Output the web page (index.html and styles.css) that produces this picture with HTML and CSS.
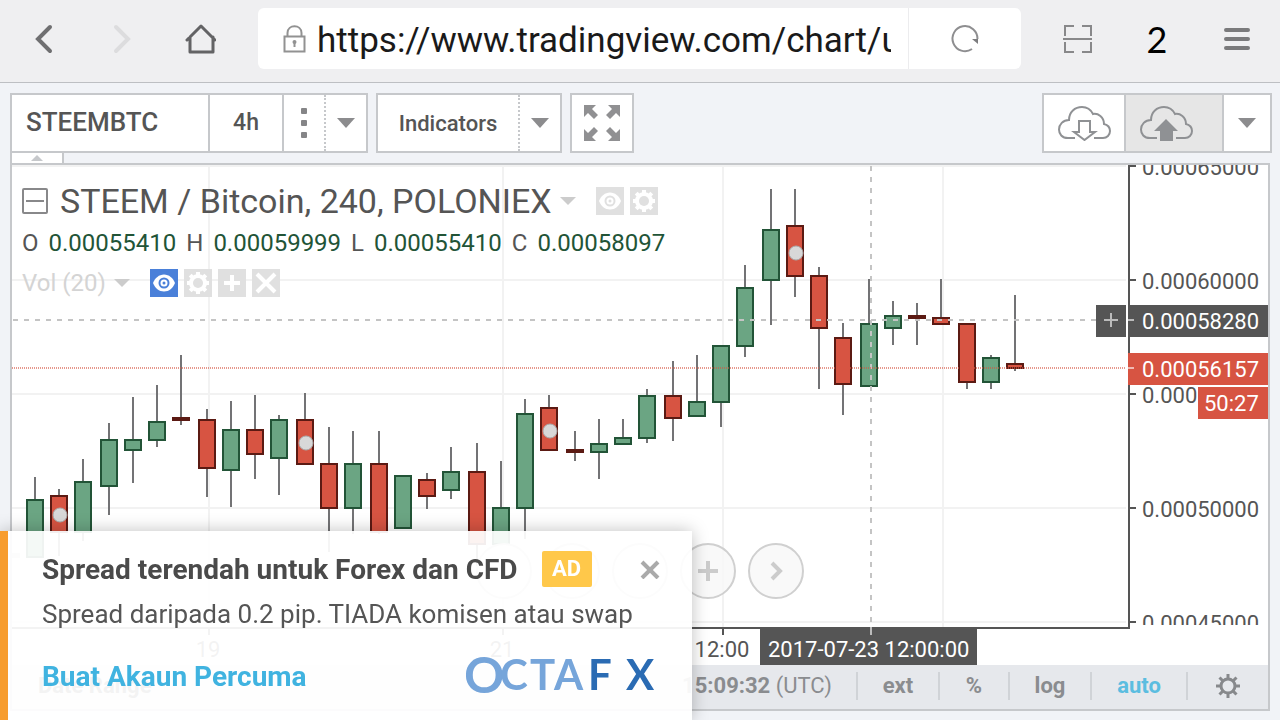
FILE: index.html
```html
<!DOCTYPE html>
<html lang="ms">
    <head>
        <meta charset="utf-8">
        <meta name="viewport" content="width=device-width,initial-scale=1.0">
        <title>STEEMBTC | Chart</title>
        <link rel="stylesheet" href="styles.css">
    </head>
    <body>
        <!-- shared icons -->
        <svg class="sprite" aria-hidden="true">
            <symbol id="eye" viewBox="0 0 28 28">
                <path d="M3 14c2-5 6-8.500 11-8.500S23 9 25 14c-2 5-6 8.500-11 8.500S5 19 3 14z" fill="#fff"/>
                <circle cx="14" cy="14" r="5.500" fill="currentColor"/>
                <circle cx="14" cy="14" r="3.500" fill="#fff"/>
                <circle cx="14" cy="14" r="1.500" fill="currentColor"/>
            </symbol>
            <symbol id="cog" viewBox="0 0 28 28">
                <circle cx="14" cy="14" r="9" fill="#fff"/>
                <path d="M14 3v22M3 14h22M6.200 6.200l15.600 15.600M21.800 6.200L6.200 21.800" stroke="#fff" stroke-width="4"/>
                <circle cx="14" cy="14" r="5" fill="currentColor"/>
            </symbol>
            <symbol id="cloud" viewBox="0 0 54 36">
                <path d="M18 33H11C5 33 2 29 2 24.500 2 19.500 6 15 12 15 12 7 18 2 25 2c6 0 9 3 11 7 5-1 11 3 11 10 4 1 6 4 6 7 0 4-3 7-7 7h-9" fill="none" stroke="#8f9194" stroke-width="2"/>
            </symbol>
            <symbol id="corner" viewBox="0 0 14 14">
                <path d="M0 0h12L8 4l6 6-4 4-6-6-4 4z" fill="#909092"/>
            </symbol>
        </svg>

        <header class="browser">
            <button type="button" class="nav-button" aria-label="Back">
                <svg width="30" height="30" viewBox="0 0 30 30"><path d="M21 3L9 15l12 12" fill="none" stroke="#6f6f71" stroke-width="4" stroke-linecap="round"/></svg>
            </button>
            <button type="button" class="nav-button" aria-label="Forward">
                <svg width="30" height="30" viewBox="0 0 30 30"><path d="M9 3l12 12L9 27" fill="none" stroke="#dcdcde" stroke-width="4" stroke-linecap="round"/></svg>
            </button>
            <button type="button" class="nav-button" aria-label="Home">
                <svg width="32" height="30" viewBox="0 0 32 30"><path d="M3 16L17 2l14 14M6 13v15h23V13" fill="none" stroke="#636365" stroke-width="3" stroke-linecap="round" stroke-linejoin="round"/></svg>
            </button>
            <form class="address">
                <svg width="24" height="28" viewBox="0 0 24 28"><path d="M1.500 11.500h20v15h-20zM4.500 11V8c0-9 14-9 14 0v3" fill="none" stroke="#929292" stroke-width="2"/><circle cx="11.500" cy="17" r="2" fill="#929292"/><path d="M11.500 17v5" stroke="#929292" stroke-width="2"/></svg>
                <input class="url" type="text" value="https://www.tradingview.com/chart/usd" aria-label="Address">
                <button type="button" class="reload" aria-label="Reload">
                    <svg width="30" height="30" viewBox="0 0 30 30"><path d="M22 25A12.500 12.500 0 1 1 27.500 15" fill="none" stroke="#8e8e90" stroke-width="2"/><path d="M22 15h6v5z" fill="#7c7c7e"/></svg>
                </button>
            </form>
            <button type="button" class="nav-button wide" aria-label="Scan">
                <svg width="30" height="28" viewBox="0 0 30 28"><path d="M12 1H3v10M20 1h9v10M1 14h29M3 17v10h9M29 17v10h-9" fill="none" stroke="#88888a" stroke-width="2"/></svg>
            </button>
            <button type="button" class="nav-button wide tabs" aria-label="Tabs">2</button>
            <button type="button" class="nav-button wide" aria-label="Menu">
                <svg width="28" height="24" viewBox="0 0 28 24"><path d="M3 3h22M3 12h22M3 21h22" stroke="#7a7a7c" stroke-width="4" stroke-linecap="round"/></svg>
            </button>
        </header>

        <div class="toolbar">
            <div class="group">
                <input class="symbol" type="text" value="STEEMBTC" aria-label="Symbol">
                <button type="button" class="interval">4h</button>
                <button type="button" class="more" aria-label="More intervals"><svg width="6" height="30" viewBox="0 0 6 30" fill="#858587"><rect width="6" height="6" rx="1"/><rect y="12" width="6" height="6" rx="1"/><rect y="24" width="6" height="6" rx="1"/></svg></button>
                <button type="button" class="drop" aria-label="Chart type"><span class="caret"></span></button>
            </div>
            <div class="group">
                <button type="button" class="indicators">Indicators</button>
                <button type="button" class="drop" aria-label="Templates"><span class="caret"></span></button>
            </div>
            <div class="group">
                <button type="button" class="fullscreen" aria-label="Fullscreen">
                    <svg width="36" height="36" viewBox="0 0 36 36">
                        <use href="#corner" width="14" height="14"/>
                        <use href="#corner" width="14" height="14" transform="translate(36 0) rotate(90)"/>
                        <use href="#corner" width="14" height="14" transform="translate(36 36) rotate(180)"/>
                        <use href="#corner" width="14" height="14" transform="translate(0 36) rotate(270)"/>
                    </svg>
                </button>
            </div>
            <div class="group last">
                <button type="button" class="cloud" aria-label="Load chart">
                    <svg width="54" height="36" viewBox="0 0 54 36"><use href="#cloud"/><path d="M22 16h11v11h5L27.500 35 17 27h5z" fill="#fff" stroke="#8f9194" stroke-width="2"/></svg>
                </button>
                <button type="button" class="cloud save" aria-label="Save chart">
                    <svg width="54" height="36" viewBox="0 0 54 36"><use href="#cloud"/><path d="M27 14l12 12h-5v10H21V26h-6z" fill="#8f9194"/></svg>
                </button>
                <button type="button" class="drop" aria-label="Save options"><span class="caret"></span></button>
            </div>
        </div>

        <button type="button" class="pull" aria-label="Hide toolbar"></button>

        <main class="frame">
            <div class="chart">
                <svg class="plot" viewBox="12 165 1256 500" preserveAspectRatio="xMidYMin meet">
                    <g class="grid">
                        <path d="M209 165v462M503 165v462M723 165v462M943 165v462"/>
                        <path d="M12 166h1114M12 280h1114M12 394h1114M12 508h1114M12 622h1114"/>
                    </g>
                    <rect x="12" y="553" width="8" height="5" fill="#ccc"/>

                    <path class="wick" d="M35 477v22M59 489v67M83 459v82M109 423v92M133 397v86M157 385v62M181 355v70M207 409v88M231 401v106M255 395v84M279 415v80M305 393v30M329 427v125M353 431v103M379 431v103M427 473v36M451 447v52M477 443v123M501 461v50M525 399v140M549 395v20M575 431v30M599 419v60M623 419v20M647 389v54M673 361v80M697 355v48M721 345v82M745 265v92M771 189v136M795 189v108M819 267v122M843 323v92M869 279v50M893 301v44M917 303v42M941 279v40M967 375v14M991 355v34M1015 295v76"/>
                    <g class="up">
                        <rect x="27" y="500" width="16" height="57"/>
                        <rect x="75" y="482" width="16" height="50"/>
                        <rect x="101" y="440" width="16" height="46"/>
                        <rect x="125" y="440" width="16" height="10"/>
                        <rect x="149" y="422" width="16" height="18"/>
                        <rect x="223" y="430" width="16" height="40"/>
                        <rect x="271" y="420" width="16" height="38"/>
                        <rect x="345" y="464" width="16" height="44"/>
                        <rect x="395" y="476" width="16" height="52"/>
                        <rect x="443" y="472" width="16" height="18"/>
                        <rect x="493" y="508" width="16" height="36"/>
                        <rect x="517" y="414" width="16" height="94"/>
                        <rect x="591" y="444" width="16" height="8"/>
                        <rect x="615" y="438" width="16" height="6"/>
                        <rect x="639" y="396" width="16" height="42"/>
                        <rect x="689" y="402" width="16" height="14"/>
                        <rect x="713" y="346" width="16" height="56"/>
                        <rect x="737" y="288" width="16" height="58"/>
                        <rect x="763" y="230" width="16" height="50"/>
                        <rect x="861" y="324" width="16" height="62"/>
                        <rect x="885" y="316" width="16" height="12"/>
                        <rect x="983" y="358" width="16" height="24"/>
                    </g>
                    <g class="down">
                        <rect x="51" y="496" width="16" height="36"/>
                        <rect x="173" y="418" width="16" height="2"/>
                        <rect x="199" y="420" width="16" height="48"/>
                        <rect x="247" y="430" width="16" height="24"/>
                        <rect x="297" y="420" width="16" height="44"/>
                        <rect x="321" y="464" width="16" height="44"/>
                        <rect x="371" y="464" width="16" height="68"/>
                        <rect x="419" y="480" width="16" height="16"/>
                        <rect x="469" y="472" width="16" height="72"/>
                        <rect x="541" y="408" width="16" height="42"/>
                        <rect x="567" y="450" width="16" height="2"/>
                        <rect x="665" y="396" width="16" height="22"/>
                        <rect x="787" y="226" width="16" height="50"/>
                        <rect x="811" y="276" width="16" height="52"/>
                        <rect x="835" y="338" width="16" height="46"/>
                        <rect x="909" y="316" width="16" height="2"/>
                        <rect x="933" y="318" width="16" height="6"/>
                        <rect x="959" y="324" width="16" height="58"/>
                        <rect x="1007" y="364" width="16" height="4"/>
                    </g>
                    <g class="marks">
                        <circle cx="60" cy="515" r="7"/>
                        <circle cx="306" cy="443" r="7"/>
                        <circle cx="550" cy="431" r="7"/>
                        <circle cx="796" cy="253" r="7"/>
                    </g>

                    <path class="crosshair" d="M871 166v461M13 320h1083"/>
                    <path class="last-price" d="M12 368h1114"/>

                    <!-- price axis -->
                    <path class="axis" d="M1129 165v463M12 628h1118M1130 166h6M1130 280h6M1130 394h6M1130 508h6M1130 622h6M209 629v6M503 629v6M723 629v6"/>
                    <svg x="1130" y="165" width="138" height="460" viewBox="1130 165 138 460">
                        <g class="label">
                            <text x="1142" y="175">0.00065000</text>
                            <text x="1142" y="289">0.00060000</text>
                            <text x="1142" y="403">0.00055000</text>
                            <text x="1142" y="517">0.00050000</text>
                            <text x="1142" y="631">0.00045000</text>
                        </g>
                    </svg>
                    <rect x="1096" y="305" width="30" height="32" fill="#555"/>
                    <path d="M1104 320h14M1111 313v14" stroke="#bbb" stroke-width="2"/>
                    <rect x="1128" y="305" width="140" height="32" fill="#555"/>
                    <rect x="1128" y="353" width="140" height="32" fill="#d75442"/>
                    <rect x="1198" y="385" width="70" height="34" fill="#fff"/>
                    <rect x="1198" y="387" width="70" height="32" fill="#d75442"/>
                    <path d="M1128 320h6M1128 368h6" stroke="#fff" stroke-width="2" opacity=".6"/>
                    <g class="label light">
                        <text x="1142" y="329">0.00058280</text>
                        <text x="1142" y="377">0.00056157</text>
                        <text x="1204" y="411">50:27</text>
                    </g>

                    <!-- time axis -->
                    <g class="label" text-anchor="middle">
                        <text x="208" y="657">19</text>
                        <text x="502" y="657">21</text>
                        <text x="722" y="657">12:00</text>
                    </g>
                    <rect x="760" y="627" width="217" height="38" fill="#555"/>
                    <path d="M871 627v8" stroke="#bbb" stroke-width="2"/>
                    <text class="label light" x="768" y="657">2017-07-23 12:00:00</text>
                </svg>

                <section class="legend">
                    <div class="legend-title">
                        <svg width="26" height="26" viewBox="0 0 26 26"><rect x="1" y="1" width="24" height="24" rx="1" fill="none" stroke="#88888a" stroke-width="2"/><path d="M4 13h18" stroke="#88888a" stroke-width="2"/></svg>
                        <h1>STEEM / Bitcoin, 240, POLONIEX</h1>
                        <span class="caret pale"></span>
                        <button type="button" class="tool" aria-label="Hide"><svg width="28" height="28"><use href="#eye"/></svg></button>
                        <button type="button" class="tool" aria-label="Format"><svg width="28" height="28"><use href="#cog"/></svg></button>
                    </div>
                    <div class="ohlc">
                        <span>O</span><b>0.00055410</b>
                        <span>H</span><b>0.00059999</b>
                        <span>L</span><b>0.00055410</b>
                        <span>C</span><b>0.00058097</b>
                    </div>
                    <div class="volume">
                        <span>Vol (20)</span>
                        <span class="caret pale"></span>
                        <button type="button" class="tool active" aria-label="Show volume"><svg width="28" height="28"><use href="#eye"/></svg></button>
                        <button type="button" class="tool" aria-label="Format volume"><svg width="28" height="28"><use href="#cog"/></svg></button>
                        <button type="button" class="tool" aria-label="Add"><svg width="28" height="28" viewBox="0 0 28 28"><path d="M14 6v16M6 14h16" stroke="#fff" stroke-width="4"/></svg></button>
                        <button type="button" class="tool" aria-label="Remove"><svg width="28" height="28" viewBox="0 0 28 28"><path d="M5 5l18 18M23 5L5 23" stroke="#fff" stroke-width="4"/></svg></button>
                    </div>
                </section>

                <div class="scroller">
                    <button type="button" aria-label="Scroll left"></button>
                    <button type="button" aria-label="Zoom out"></button>
                    <button type="button" aria-label="Reset"></button>
                    <button type="button" aria-label="Zoom in"><svg width="20" height="20" viewBox="0 0 20 20"><path d="M0 10h20M10 0v20"/></svg></button>
                    <button type="button" aria-label="Scroll right"><svg width="20" height="20" viewBox="0 0 20 20"><path d="M6 2l8 8-8 8"/></svg></button>
                </div>
            </div>

            <footer class="status">
                <button type="button" class="range">Date Range</button>
                <span class="clock"><b>15:09:32</b> (UTC)</span>
                <button type="button" class="scale">ext</button>
                <button type="button" class="scale percent">%</button>
                <button type="button" class="scale">log</button>
                <button type="button" class="scale auto">auto</button>
                <button type="button" class="scale" aria-label="Settings">
                    <svg width="26" height="26" viewBox="0 0 26 26" fill="none" stroke="#87898c"><circle cx="13" cy="13" r="7" stroke-width="3"/><path d="M13 1v5M13 20v5M1 13h5M20 13h5M4.500 4.500L8 8M18 18l3.500 3.500M21.500 4.500L18 8M8 18l-3.500 3.500" stroke-width="3"/></svg>
                </button>
            </footer>
        </main>

        <aside class="ad">
            <div class="ad-head">
                <h2>Spread terendah untuk Forex dan CFD</h2>
                <span class="badge">AD</span>
                <button type="button" class="close" aria-label="Close"><svg width="20" height="20" viewBox="0 0 20 20"><path d="M2 3l16 16M18 3L2 19" stroke="#aaa" stroke-width="4"/></svg></button>
            </div>
            <p>Spread daripada 0.2 pip. TIADA komisen atau swap</p>
            <div class="ad-foot">
                <a href="#">Buat Akaun Percuma</a>
                <svg class="logo" width="194" height="40" viewBox="0 0 194 40" role="img" aria-label="OctaFX">
                    <text x="-2" y="37" font-size="50">O</text>
                    <text x="34 64 88" y="34" font-size="42">CTA</text>
                    <text x="122 160" y="34" font-size="42" class="fx">FX</text>
                </svg>
            </div>
        </aside>
    </body>
</html>
```
FILE: styles.css
```css
* {
    box-sizing: border-box;
}

html, body {
    margin: 0;
    padding: 0;
}

body {
    display: flex;
    flex-direction: column;
    min-height: 100vh;
    font-family: Roboto, sans-serif;
    font-size: 22px;
    color: #555;
    background-color: #f1f3f7;
}

input, button {
    margin: 0;
    padding: 0;
    border: none;
    font-family: Roboto, sans-serif;
    font-size: 22px;
    color: #555;
    background: none;
    outline: none;
}

button {
    display: flex;
    align-items: center;
    justify-content: center;
    cursor: pointer;
}

svg {
    display: block;
    flex: none;
}

.sprite {
    position: absolute;
    width: 0;
    height: 0;
}

/* browser bar */
.browser {
    display: flex;
    align-items: center;
    height: 83px;
    padding: 0 3px 5px 5px;
    border-bottom: 1px solid #bdbfc3;
    background-color: #efeff1;
}

.nav-button {
    width: 78px;
    height: 60px;
}

.nav-button.wide {
    width: 80px;
}

.nav-button.tabs {
    font-family: Lato, sans-serif;
    font-size: 36px;
    color: #000;
}

.address {
    display: flex;
    flex: 1;
    align-items: center;
    min-width: 0;
    height: 61px;
    margin: 0 16px 0 19px;
    padding-left: 25px;
    border-radius: 6px;
    background-color: #fff;
}

.url {
    flex: 1;
    min-width: 0;
    height: 60px;
    margin: 0 17px 0 10px;
    padding-top: 3px;
    font-size: 35px;
    color: #1a1a1a;
}

.reload {
    width: 113px;
    height: 61px;
    border-left: 1px solid #ececee;
}

/* toolbar */
.toolbar {
    display: flex;
    gap: 8px;
    padding: 10px 8px 0 10px;
}

.group {
    display: flex;
    height: 60px;
    border: 2px solid #c6c8cb;
    background-color: #fff;
}

.group.last {
    margin-left: auto;
}

.symbol {
    width: 196px;
    padding: 0 0 2px 14px;
    font-size: 26px;
    font-weight: 500;
}

.interval {
    width: 76px;
    padding-bottom: 2px;
    border: solid #c6c8cb;
    border-width: 0 2px;
    font-size: 23px;
    font-weight: 500;
}

.more {
    width: 40px;
}

.drop {
    width: 42px;
    border-left: 2px dotted #c6c8cb;
}

.group.last .drop {
    width: 48px;
    border-left-style: solid;
}

.indicators {
    width: 140px;
    font-weight: 500;
}

.fullscreen {
    width: 60px;
}

.cloud {
    width: 80px;
}

.cloud.save {
    justify-content: flex-start;
    width: 98px;
    padding-left: 13px;
    border-left: 2px solid #c6c8cb;
    background-color: #e6e6e6;
}

.caret {
    border: solid transparent;
    border-width: 10px 9px 0;
    border-top-color: #8c8c8e;
}

.caret.pale {
    border-width: 8px 8px 0;
    border-top-color: #ccc;
}

.pull {
    width: 54px;
    height: 10px;
    margin-left: 10px;
    border: solid #c6c8cb;
    border-width: 0 2px;
    background-color: #fff;
}

.pull::before {
    content: "";
    border: solid transparent;
    border-width: 0 6px 6px;
    border-bottom-color: #c6c8cb;
}

/* chart */
.frame {
    display: flex;
    flex: 1;
    flex-direction: column;
    margin: 0 10px 9px;
    border: 2px solid #c6c8cb;
    background-color: #fff;
}

.chart {
    position: relative;
    flex: 1;
}

.plot {
    width: 100%;
}

.grid {
    stroke: #f2f2f2;
    stroke-width: 2;
}

.wick {
    stroke: #737375;
    stroke-width: 2;
}

.up {
    fill: #6ba583;
    stroke: #225437;
    stroke-width: 2;
}

.down {
    fill: #d75442;
    stroke: #5b1a13;
    stroke-width: 2;
}

.marks {
    fill: #d8d8d8;
    stroke: #aaa;
}

.crosshair {
    stroke: #c4c4c4;
    stroke-width: 2;
    stroke-dasharray: 5 6;
}

.last-price {
    stroke: #d75442;
    stroke-width: 2;
    stroke-dasharray: 1 1;
    opacity: 0.6;
}

.axis {
    fill: none;
    stroke: #555;
    stroke-width: 2;
}

.label {
    font-size: 22px;
    fill: #555;
}

.label.light {
    fill: #fff;
}

.legend {
    position: absolute;
    top: 15px;
    left: 10px;
}

.legend-title, .ohlc, .volume {
    display: flex;
    align-items: center;
    height: 42px;
}

.legend-title h1 {
    margin: 0 8px 0 12px;
    font-size: 34px;
    font-weight: 400;
}

.ohlc {
    gap: 10px;
    font-size: 24px;
}

.ohlc b {
    font-weight: 400;
    color: #225437;
}

.volume {
    height: 38px;
    font-size: 24px;
    color: #d4d4d4;
}

.volume .caret {
    margin-left: 8px;
}

.tool {
    width: 28px;
    height: 28px;
    margin-left: 6px;
    color: #e0e0e0;
    background-color: #e0e0e0;
}

.caret + .tool {
    margin-left: 20px;
}

.tool.active {
    color: #4a80d9;
    background-color: #4a80d9;
}

.scroller {
    position: absolute;
    left: 464px;
    bottom: 66px;
    display: flex;
    gap: 12px;
}

.scroller button {
    width: 56px;
    height: 56px;
    border: 2px solid #d0d0d0;
    border-radius: 50%;
    background-color: rgba(247, 247, 247, 0.8);
}

.scroller path {
    fill: none;
    stroke: #ccc;
    stroke-width: 4;
}

.status {
    display: flex;
    align-items: center;
    height: 44px;
    padding-bottom: 3px;
    color: #8a8c8f;
    background-color: #e6e8ec;
}

.range {
    margin-left: 26px;
    font-weight: 700;
}

.clock {
    margin: 0 24px 0 auto;
}

.scale {
    width: 82px;
    height: 28px;
    border-left: 2px solid #d0d3d7;
    font-weight: 700;
    color: #8a8c8f;
}

.percent {
    width: 70px;
}

.auto {
    width: 96px;
    color: #5bbde0;
}

/* ad */
.ad {
    position: fixed;
    left: 0;
    bottom: 0;
    width: 692px;
    max-width: 100%;
    height: 189px;
    padding: 20px 32px 0 34px;
    border-left: 8px solid #f79d2e;
    background-color: rgba(255, 255, 255, 0.93);
    box-shadow: 0 0 16px rgba(0, 0, 0, 0.25);
}

.ad-head, .ad-foot {
    display: flex;
    align-items: center;
}

.ad h2 {
    margin: 0 24px 0 0;
    font-size: 28px;
    font-weight: 700;
    color: #4a4a4a;
}

.badge {
    width: 50px;
    border-radius: 2px;
    font-weight: 700;
    line-height: 36px;
    text-align: center;
    color: #fff;
    background-color: #ffc84a;
}

.close {
    margin-left: auto;
}

.ad p {
    margin: 9px 0 24px;
    font-size: 26px;
    line-height: 36px;
}

.ad-foot {
    justify-content: space-between;
}

.ad a {
    font-size: 28px;
    font-weight: 700;
    color: #40b3e0;
    text-decoration: none;
}

.logo text {
    font-family: Lato, sans-serif;
    font-weight: 700;
    fill: #76a5da;
}

.logo .fx {
    fill: #2a6bb3;
}
```
